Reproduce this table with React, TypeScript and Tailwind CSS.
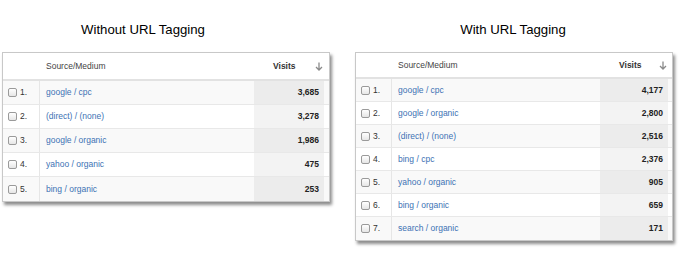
import React from "react";

type Row = { src: string; v: string };

const left: Row[] = [
  { src: "google / cpc", v: "3,685" },
  { src: "(direct) / (none)", v: "3,278" },
  { src: "google / organic", v: "1,986" },
  { src: "yahoo / organic", v: "475" },
  { src: "bing / organic", v: "253" },
];

const right: Row[] = [
  { src: "google / cpc", v: "4,177" },
  { src: "google / organic", v: "2,800" },
  { src: "(direct) / (none)", v: "2,516" },
  { src: "bing / cpc", v: "2,376" },
  { src: "yahoo / organic", v: "905" },
  { src: "bing / organic", v: "659" },
  { src: "search / organic", v: "171" },
];

function Checkbox() {
  return (
    <span className="inline-block w-[9px] h-[9px] rounded-[2px] border border-[#9a9a9a] bg-gradient-to-b from-white to-[#e6e6e6] mr-[3px]" />
  );
}

function Arrow() {
  return (
    <svg width="8" height="9" viewBox="0 0 8 9" className="block">
      <path d="M4 0.5 V8 M1 5 L4 8 L7 5" stroke="#8a8a8a" strokeWidth="1.3" fill="none" />
    </svg>
  );
}

function Table({
  rows,
  cols,
  headH,
  rowH,
  width,
}: {
  rows: Row[];
  cols: string;
  headH: string;
  rowH: string;
  width: string;
}) {
  return (
    <div
      className={`${width} border border-[#c8c8c8] bg-white shadow-[2px_3px_3px_rgba(0,0,0,0.45)] text-[8.5px] leading-none`}
      style={{ fontFamily: "Arial, 'Liberation Sans', Helvetica, sans-serif" }}
    >
      <div className={`grid ${cols} ${headH} border-b-2 border-[#e2e2e2]`}>
        <div />
        <div className="flex items-center pl-[6px] text-[#444]">Source/Medium</div>
        <div className="flex items-center justify-between pl-[19px] pr-[1px] font-bold text-[#333]">
          <span>Visits</span>
          <Arrow />
        </div>
        <div />
      </div>
      {rows.map((r, i) => {
        const odd = i % 2 === 0;
        return (
          <div
            key={i}
            className={`grid ${cols} ${rowH} ${i < rows.length - 1 ? "border-b border-[#e8e8e8]" : ""} ${odd ? "bg-[#f9f9f9]" : "bg-white"}`}
          >
            <div className="flex items-center pl-[5px] border-r border-[#e6e6e6] text-[#333]">
              <Checkbox />
              <span>{i + 1}.</span>
            </div>
            <div className="flex items-center pl-[6px] text-[#3d72b4]">{r.src}</div>
            <div
              className={`flex items-center justify-end pr-[5px] font-bold text-[#222] ${odd ? "bg-[#ececec]" : "bg-[#f3f3f3]"}`}
            >
              {r.v}
            </div>
            <div />
          </div>
        );
      })}
    </div>
  );
}

export default function App() {
  return (
    <div
      className="flex w-[683px] h-[254px] bg-white"
      style={{ fontFamily: "Arial, 'Liberation Sans', Helvetica, sans-serif" }}
    >
      <div className="w-[355px] pl-[2px] flex flex-col">
        <div className="w-[282px] h-[52px] pt-[22px] text-center text-[13.2px] leading-[16px] text-black">
          Without URL Tagging
        </div>
        <Table
          rows={left}
          width="w-[328px]"
          cols="grid-cols-[37px_214px_70px_1fr]"
          headH="h-[28px]"
          rowH="h-[24px]"
        />
      </div>
      <div className="flex flex-col">
        <div className="w-[316px] h-[52px] pt-[22px] text-center text-[13.2px] leading-[16px] text-black">
          With URL Tagging
        </div>
        <Table
          rows={right}
          width="w-[318px]"
          cols="grid-cols-[36px_208px_68px_1fr]"
          headH="h-[26px]"
          rowH="h-[23px]"
        />
      </div>
    </div>
  );
}
